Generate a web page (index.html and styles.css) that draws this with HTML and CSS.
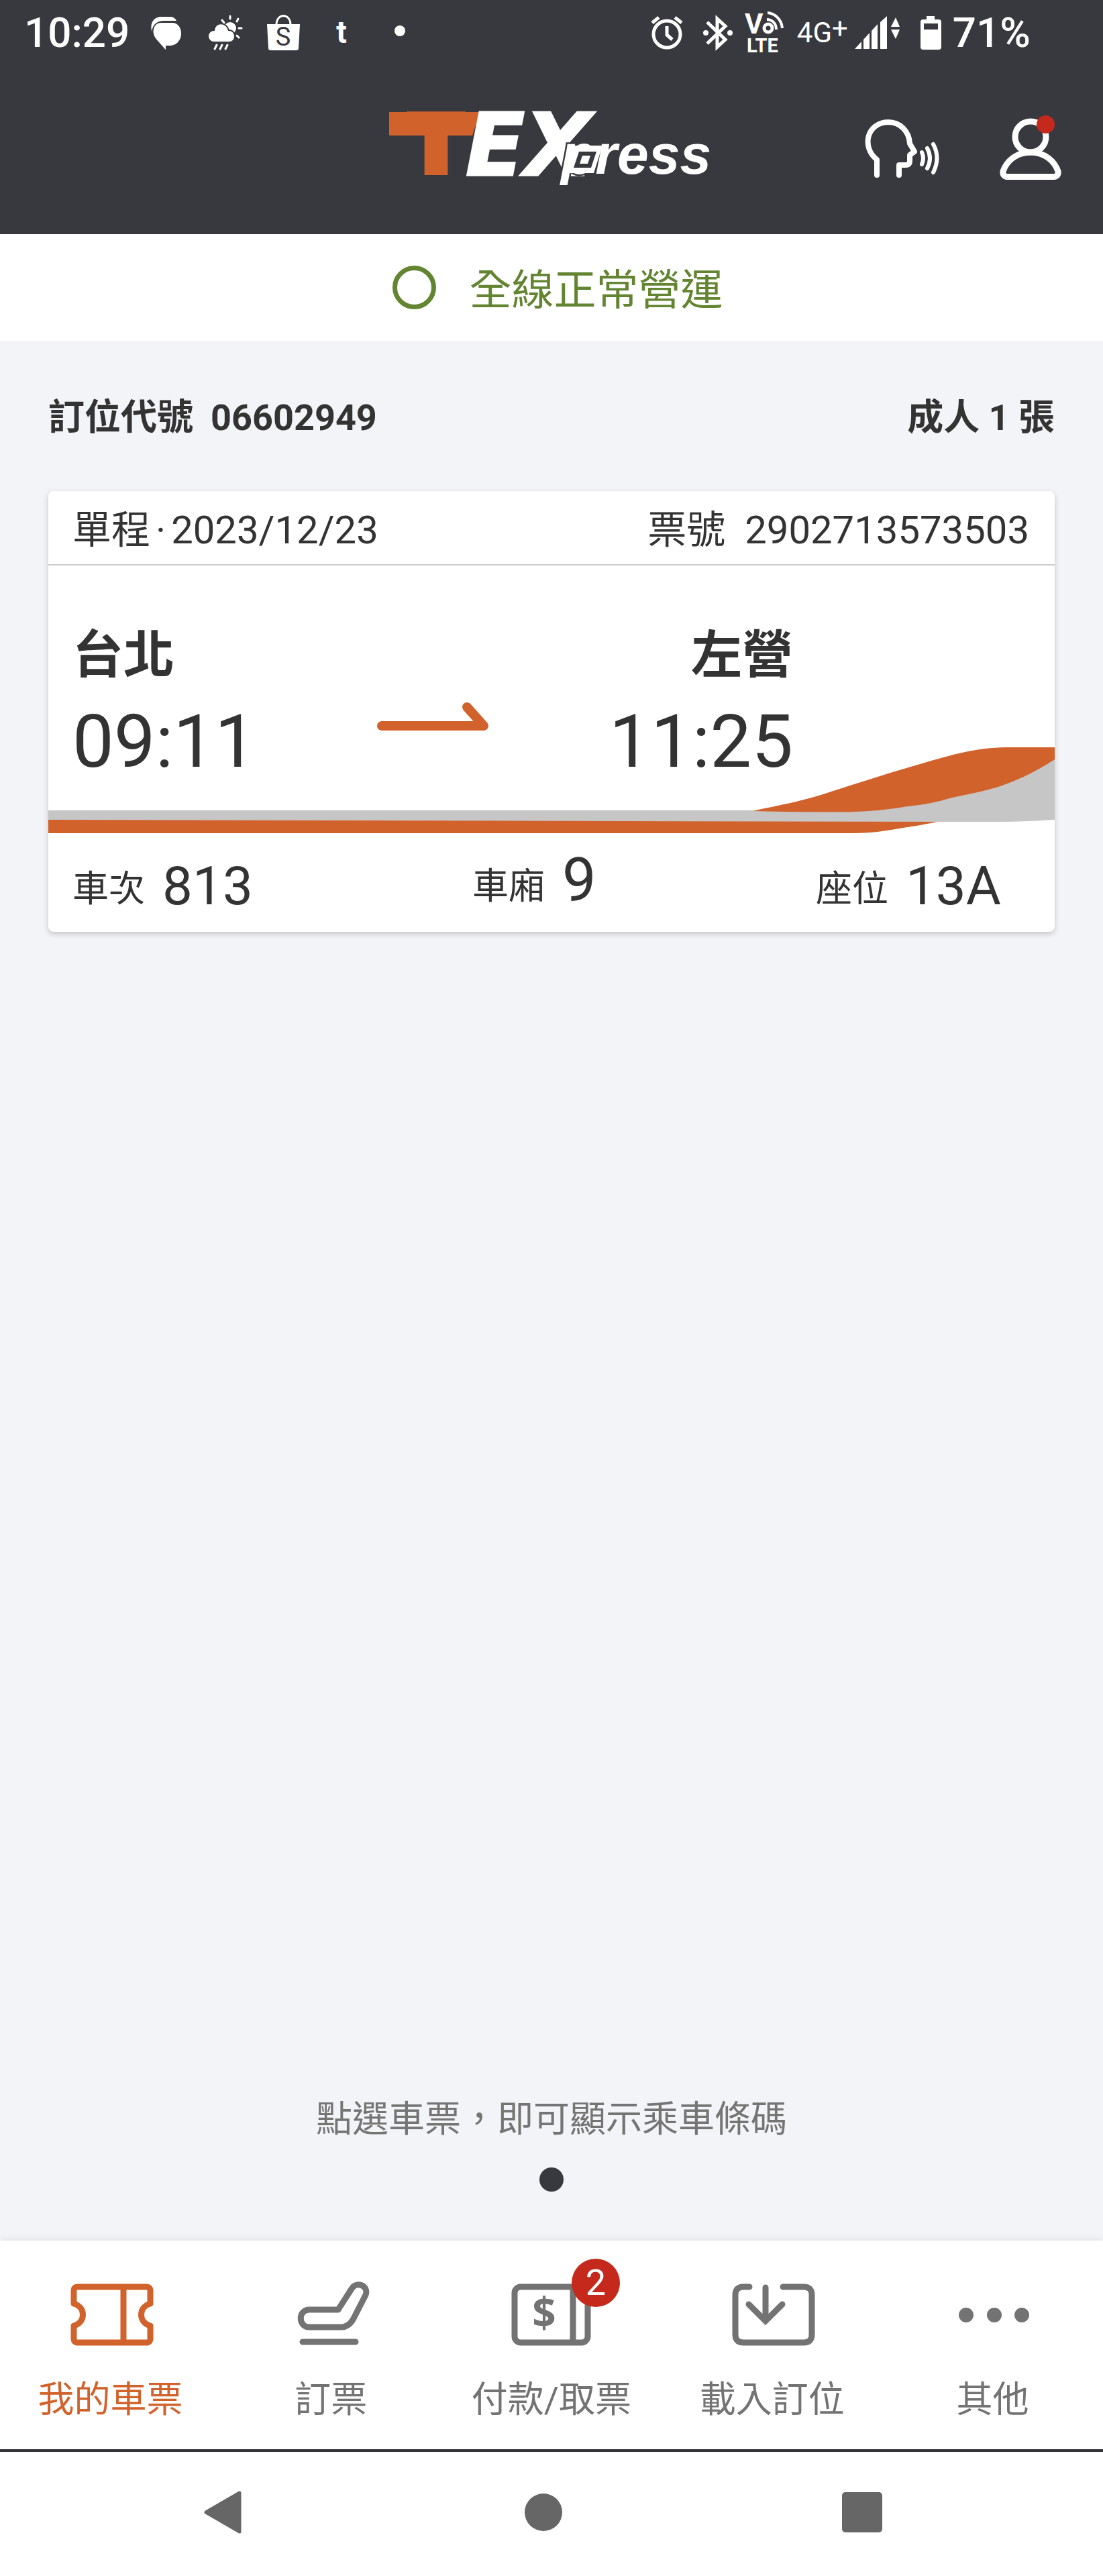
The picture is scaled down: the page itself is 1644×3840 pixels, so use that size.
FILE: index.html
```html
<!DOCTYPE html>
<html lang="zh-Hant">
<head>
    <meta charset="UTF-8">
    <meta name="viewport" content="width=device-width, initial-scale=1.0">
    <title>我的車票</title>
    <link rel="stylesheet" href="styles.css">
</head>
<body>
    <header class="header">
        <div class="status-bar">
            <span class="status-text">10:29</span>
            <div class="status-left">
                <svg width="49" height="54" viewBox="0 0 49 54" fill="#fff">
                    <path d="M4 26C-1 14 6 3 17 3h14c4 0 8 3 9 6H21C12 9 6 14 4 26z"/>
                    <path d="M17 11h17c9 0 14 8 14 17 0 11-8 19-18 19h-5v8L10 38C0 27 5 11 17 11z" stroke="#38393e" stroke-width="2"/>
                </svg>
                <svg width="50" height="54" viewBox="0 0 50 54" fill="#fff">
                    <g stroke="#fff" stroke-width="3" stroke-linecap="round">
                        <path d="M33 2v4M45 6l-2 4M21 8l3 4M46 20h4M43 31l3 3"/>
                        <path d="M13 45l-3 6M21 45l-3 6M29 45l-3 6"/>
                    </g>
                    <circle cx="33" cy="20" r="9"/>
                    <path d="M9 41a9 9 0 0 1 0-18c1-13 19-13 22 0 12 0 12 18 1 18z" stroke="#38393e" stroke-width="2"/>
                </svg>
                <svg width="49" height="54" viewBox="0 0 49 54">
                    <path d="M0 14h49l-2 36q0 3-4 3H6q-4 0-4-3z" fill="#fff"/>
                    <path d="M14 15c0-18 21-18 21 0" fill="none" stroke="#fff" stroke-width="3"/>
                    <text class="bag-letter" x="24" y="46" text-anchor="middle">S</text>
                </svg>
                <svg width="49" height="54" viewBox="0 0 49 54">
                    <text class="t-letter" x="24" y="42" text-anchor="middle">t</text>
                </svg>
                <svg width="49" height="54" viewBox="0 0 49 54" fill="#fff"><circle cx="24" cy="24" r="8"/></svg>
            </div>
            <div class="status-right">
                <svg width="68" height="54" viewBox="0 0 68 54" fill="none" stroke="#fff" stroke-width="5">
                    <circle cx="24" cy="29" r="20"/>
                    <path d="M24 17v13l8 7M2 12L12 4M46 12L36 4"/>
                </svg>
                <svg width="52" height="54" viewBox="0 0 52 54" fill="none" stroke="#fff" stroke-width="5">
                    <path d="M6 11l27 26-12 11V6l12 11L6 43"/>
                    <circle cx="4" cy="27" r="4" fill="#fff" stroke="none"/>
                    <circle cx="40" cy="27" r="4" fill="#fff" stroke="none"/>
                </svg>
                <svg width="68" height="64" viewBox="0 0 68 64">
                    <text class="volte-v" x="0" y="33">V</text>
                    <circle cx="35" cy="25" r="6" fill="none" stroke="#fff" stroke-width="5"/>
                    <path d="M33 12c8 0 14 6 14 15M34 2c12 1 21 11 22 23" fill="none" stroke="#fff" stroke-width="4"/>
                    <text class="volte-lte" x="3" y="61">LTE</text>
                </svg>
                <span class="network">4G<sup>+</sup></span>
                <svg width="82" height="54" viewBox="0 0 82 54" fill="#fff">
                    <path d="M0 51l10-11v11zM13 51V37l9-10v24zM25 51V24l9-10v37zM38 51V11L48 2v49z"/>
                    <path d="M54 18l7-14 6 14zM54 22h13l-6 14z"/>
                </svg>
                <svg width="44" height="54" viewBox="0 0 44 54">
                    <path d="M15 2h12v5h6q4 0 4 4v37q0 4-4 4H10q-4 0-4-4V11q0-4 4-4h5z" fill="#fff"/>
                    <path d="M11 13h21v9H11z" fill="#38393e"/>
                </svg>
                <span class="status-text">71%</span>
            </div>
        </div>
        <div class="app-bar">
            <svg class="logo" role="img" aria-label="TEXpress" width="484" height="110" viewBox="0 0 484 110">
                <path d="M0 0H136L124 35H0z" fill="#d2622c"/>
                <text class="logo-t" x="70" y="87" text-anchor="middle">T</text>
                <text class="logo-ex" x="114" y="94">EX</text>
                <text class="logo-press" x="256" y="92">press</text>
                <path d="M276 50h42l-13 41h-42z" fill="#fff"/>
                <path d="M283 59h26l-8 24h-26z" fill="#38393e"/>
                <path d="M288 65h12l-4 12h-12z" fill="#fff"/>
            </svg>
            <div class="actions">
                <button class="icon-btn" type="button" aria-label="語音">
                    <svg width="112" height="92" viewBox="0 0 112 92" fill="none" stroke="#fff" stroke-width="8" stroke-linecap="round" stroke-linejoin="round">
                        <path d="M18 85V62C-5 44 2 7 35 6c17 0 31 13 32 32l7 12-7 5v8c0 6-3 7-6 7H51v15"/>
                        <path d="M85 51q4 9 0 18M93 45q8 15 0 30M102 39q11 20 0 42" stroke-width="6"/>
                    </svg>
                </button>
                <button class="icon-btn" type="button" aria-label="會員">
                    <svg width="92" height="92" viewBox="0 0 92 92" fill="none" stroke="#fff" stroke-width="9" stroke-linejoin="round">
                        <circle cx="46" cy="28" r="23"/>
                        <path d="M11 87.500h70q7-1 6-8C82 65 68 51 46 51S10 65 5 79.500q-1 7 6 8z"/>
                    </svg>
                    <span class="alert-dot"></span>
                </button>
            </div>
        </div>
    </header>

    <div class="notice">
        <span class="notice-ring"></span>
        <span class="notice-text">全線正常營運</span>
    </div>

    <main class="main">
        <div class="booking">
            <div class="booking-code"><span>訂位代號</span><span>06602949</span></div>
            <div>成人 1 張</div>
        </div>

        <article class="ticket">
            <div class="ticket-head">
                <div class="ticket-date"><span>單程</span><span>·</span><time>2023/12/23</time></div>
                <div class="ticket-no"><span>票號</span><span>2902713573503</span></div>
            </div>
            <div class="ticket-body">
                <!-- train nose stripe -->
                <svg class="wave" viewBox="0 0 1500 128" preserveAspectRatio="none">
                    <path d="M0 107H1345C1310 115 1280 119 1250 124Q1225 128 1195 128H0z" fill="#d2622c"/>
                    <path d="M0 94H1120L1250 70 1500 15V108C1440 112 1400 111 1332 111L0 108z" fill="#c6c6c6"/>
                    <path d="M1050 95C1075 89 1100 85 1122 79C1150 73 1180 61 1214 51Q1260 36 1306 23C1360 7 1390 0 1435 0H1500V18Q1460 44 1419 58C1390 67 1370 70 1347 75Q1315 85 1281 88Q1235 96 1188 96.500Q1120 97 1050 95z" fill="#d2622c"/>
                </svg>
                <div class="stop">
                    <span class="station">台北</span>
                    <time class="time">09:11</time>
                </div>
                <svg class="arrow" width="166" height="42" viewBox="0 0 166 42" fill="none" stroke="#d2622c" stroke-width="14" stroke-linecap="round" stroke-linejoin="round">
                    <path d="M7 35H159L134 7"/>
                </svg>
                <div class="stop stop-end">
                    <span class="station">左營</span>
                    <time class="time">11:25</time>
                </div>
            </div>
            <div class="ticket-foot">
                <div class="seat-item"><span>車次</span><span class="value">813</span></div>
                <div class="seat-item seat-car"><span>車廂</span><span class="value">9</span></div>
                <div class="seat-item"><span>座位</span><span class="value">13A</span></div>
            </div>
        </article>

        <p class="hint">點選車票，即可顯示乘車條碼</p>
        <span class="page-dot"></span>
    </main>

    <nav class="tabs">
        <a class="tab active" href="#">
            <svg width="130" height="100" viewBox="0 0 130 100" fill="none" stroke="currentColor" stroke-width="9" stroke-linejoin="round">
                <path d="M17 9H119Q125 9 125 15V34C107 39 107 62 125 67V86Q125 92 119 92H17Q11 92 11 86V67C29 62 29 39 11 34V15Q11 9 17 9zM85 9V92"/>
            </svg>
            <span>我的車票</span>
        </a>
        <a class="tab" href="#">
            <svg width="130" height="100" viewBox="0 0 130 100" fill="none" stroke="currentColor" stroke-width="9" stroke-linecap="round" stroke-linejoin="round">
                <path d="M33 43H76L96 12C103 0 122 7 117 21L98 58Q91 69 81 69H33C16 69 16 43 33 43zM23 91H102"/>
            </svg>
            <span>訂票</span>
        </a>
        <a class="tab" href="#">
            <span class="tab-icon">
                <svg width="130" height="100" viewBox="0 0 130 100" fill="none" stroke="currentColor" stroke-width="9">
                    <rect x="10" y="9" width="109" height="83" rx="9"/>
                    <path d="M97 9V92"/>
                    <text class="dollar" x="54" y="70" text-anchor="middle">$</text>
                </svg>
                <span class="badge">2</span>
            </span>
            <span>付款/取票</span>
        </a>
        <a class="tab" href="#">
            <svg width="130" height="100" viewBox="0 0 130 100" fill="none" stroke="currentColor" stroke-width="9" stroke-linecap="round">
                <path d="M31 9H22Q10 9 10 21V80Q10 92 22 92H112Q124 92 124 80V21Q124 9 112 9H81"/>
                <path d="M55 10V58M30 35L55 60L80 35"/>
            </svg>
            <span>載入訂位</span>
        </a>
        <a class="tab" href="#">
            <svg width="130" height="100" viewBox="0 0 130 100" fill="currentColor">
                <circle cx="25" cy="51" r="11"/>
                <circle cx="67" cy="51" r="11"/>
                <circle cx="108" cy="51" r="11"/>
            </svg>
            <span>其他</span>
        </a>
    </nav>

    <div class="system-nav">
        <button class="icon-btn" type="button" aria-label="返回">
            <svg width="56" height="64" viewBox="0 0 56 64"><path d="M3 32L53 3V61z" stroke="#666" stroke-width="5" stroke-linejoin="round"/></svg>
        </button>
        <button class="icon-btn" type="button" aria-label="主畫面">
            <svg width="60" height="64" viewBox="0 0 60 64"><circle cx="32" cy="32" r="28"/></svg>
        </button>
        <button class="icon-btn" type="button" aria-label="最近使用">
            <svg width="60" height="64" viewBox="0 0 60 64"><rect y="2" width="60" height="60" rx="5"/></svg>
        </button>
    </div>
</body>
</html>
```
FILE: styles.css
```css
* {
    box-sizing: border-box;
}
body {
    margin: 0;
    min-height: 100vh;
    display: flex;
    flex-direction: column;
    background-color: #f3f4f7;
    color: #333;
    font-family: Roboto, "Noto Sans CJK TC", sans-serif;
    font-size: 54px;
    line-height: 70px;
}
svg {
    display: block;
    flex-shrink: 0;
    overflow: visible;
}
.icon-btn {
    position: relative;
    padding: 0;
    border: none;
    background: none;
    cursor: pointer;
}

/* header */
.header {
    background-color: #38393e;
    color: #fff;
}
.status-bar {
    display: flex;
    align-items: center;
    height: 98px;
    padding: 0 108px 0 36px;
}
.status-text {
    font-size: 62px;
    font-weight: 500;
}
.status-left {
    display: flex;
    align-items: center;
    gap: 38px;
    margin-left: 30px;
}
.status-right {
    display: flex;
    align-items: center;
    gap: 10px;
    margin-left: auto;
}
.bag-letter {
    font-size: 38px;
    fill: #38393e;
}
.t-letter {
    font-size: 46px;
    font-weight: 700;
    fill: #fff;
}
.volte-v {
    font-size: 42px;
    font-weight: 700;
    fill: #fff;
}
.volte-lte {
    font-size: 29px;
    font-weight: 700;
    fill: #fff;
}
.network {
    font-size: 42px;
    line-height: 60px;
}
.network sup {
    font-size: 42px;
    line-height: 0;
    vertical-align: 6px;
}
.app-bar {
    display: grid;
    grid-template-columns: 1fr auto 1fr;
    align-items: center;
    height: 251px;
    padding: 0 62px 4px;
}
.logo {
    grid-column: 2;
}
.logo-t {
    font-family: "DejaVu Sans", sans-serif;
    font-size: 110px;
    font-weight: 700;
    fill: #d2622c;
    stroke: #d2622c;
    stroke-width: 14px;
}
.logo-ex {
    font-family: "DejaVu Sans", sans-serif;
    font-size: 129px;
    font-weight: 700;
    font-style: italic;
    fill: #fff;
    stroke: #fff;
    stroke-width: 3px;
}
.logo-press {
    font-family: "Liberation Sans", sans-serif;
    font-size: 84px;
    font-weight: 700;
    font-style: italic;
    fill: #fff;
    stroke: #38393e;
    stroke-width: 5px;
    paint-order: stroke;
}
.actions {
    display: flex;
    justify-content: flex-end;
    gap: 89px;
}
.alert-dot {
    position: absolute;
    top: -4px;
    right: 10px;
    width: 27px;
    height: 27px;
    border-radius: 50%;
    background-color: #c4291c;
}

/* service notice */
.notice {
    display: flex;
    justify-content: center;
    align-items: center;
    gap: 50px;
    height: 159px;
    padding-left: 18px;
    background-color: #fff;
    color: #638532;
    font-size: 63px;
}
.notice-ring {
    width: 65px;
    height: 65px;
    border: 7px solid #638532;
    border-radius: 50%;
}
.notice-text {
    padding-top: 8px;
}

/* ticket list */
.main {
    flex: 1;
    display: flex;
    flex-direction: column;
    padding: 80px 72px 73px;
}
.booking {
    display: flex;
    justify-content: space-between;
    font-weight: 700;
}
.booking-code {
    display: flex;
    gap: 26px;
}
.ticket {
    margin-top: 74px;
    border-radius: 8px;
    background-color: #fff;
    box-shadow: 0 3px 8px rgba(0, 0, 0, 0.2);
}
.ticket-head {
    display: flex;
    justify-content: space-between;
    align-items: center;
    height: 111px;
    padding: 6px 38px 0 36px;
    border-bottom: 2px solid #ccc;
    font-size: 58px;
}
.ticket-date {
    display: flex;
    gap: 8px;
}
.ticket-no {
    display: flex;
    gap: 29px;
}
.ticket-body {
    position: relative;
    display: flex;
    justify-content: space-between;
    align-items: flex-end;
    padding: 89px 26% 71px 36px;
}
.wave {
    position: absolute;
    left: 0;
    bottom: 0;
    width: 100%;
    height: 128px;
}
.stop {
    position: relative;
    display: flex;
    flex-direction: column;
    gap: 19px;
}
.stop-end {
    text-align: right;
}
.station {
    font-size: 76px;
    font-weight: 700;
    line-height: 90px;
}
.time {
    font-size: 110px;
    line-height: 130px;
}
.arrow {
    margin-bottom: 82px;
}
.ticket-foot {
    display: flex;
    justify-content: space-between;
    align-items: flex-end;
    height: 147px;
    padding: 0 80px 28px 36px;
}
.seat-item {
    display: flex;
    align-items: flex-end;
    gap: 26px;
}
.value {
    font-size: 80px;
    line-height: 80px;
}
.seat-car {
    padding-bottom: 4px;
}
.seat-car .value {
    font-size: 90px;
    line-height: 88px;
}
.hint {
    margin: auto 0 36px;
    color: #757575;
    text-align: center;
}
.page-dot {
    align-self: center;
    width: 36px;
    height: 36px;
    border-radius: 50%;
    background-color: #38393e;
}

/* bottom tabs */
.tabs {
    display: grid;
    grid-template-columns: repeat(5, 1fr);
    padding: 60px 0 38px;
    background-color: #fff;
    box-shadow: 0 0 12px rgba(0, 0, 0, 0.1);
}
.tab {
    display: flex;
    flex-direction: column;
    align-items: center;
    gap: 43px;
    color: #737373;
    text-decoration: none;
}
.tab.active {
    color: #d2622c;
}
.tab-icon {
    position: relative;
}
.dollar {
    font-family: "Open Sans", sans-serif;
    font-size: 62px;
    font-weight: 700;
    fill: currentColor;
    stroke: none;
}
.badge {
    position: absolute;
    top: -33px;
    right: -37px;
    width: 72px;
    height: 72px;
    border-radius: 50%;
    background-color: #c4291c;
    color: #fff;
    line-height: 72px;
    text-align: center;
}

/* system navigation */
.system-nav {
    display: flex;
    justify-content: space-between;
    padding: 58px 20% 63px 18.5%;
    border-top: 4px solid #333439;
    background-color: #fff;
    fill: #666;
}
```
